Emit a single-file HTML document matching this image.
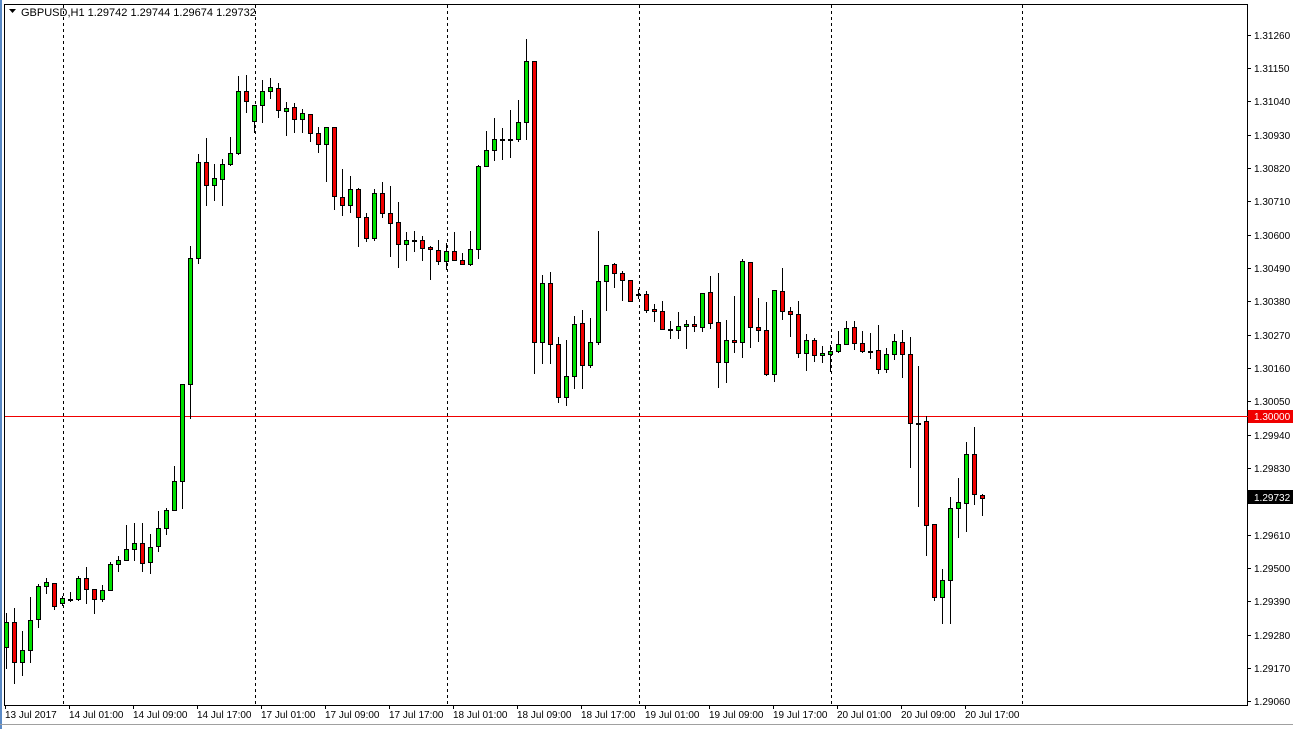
<!DOCTYPE html><html><head><meta charset="utf-8"><style>
html,body{margin:0;padding:0;background:#fff;width:1293px;height:729px;overflow:hidden}
svg{display:block;font-family:"Liberation Sans",sans-serif}
.g{fill:#00e000;stroke:#000;stroke-width:1}
.r{fill:#f00000;stroke:#000;stroke-width:1}
.w{stroke:#000;stroke-width:1}
.ax{font-size:10px;fill:#000}
</style></head><body>
<svg width="1293" height="729" viewBox="0 0 1293 729" xmlns="http://www.w3.org/2000/svg">
<rect x="0" y="0" width="2" height="729" fill="#5a8ac6"/>
<rect x="4.5" y="4.5" width="1243" height="701" fill="#fff" stroke="#000"/>
<g stroke="#000" stroke-dasharray="3,3">
<path d="M63.5 5V705M255.5 5V705M447.5 5V705M639.5 5V705M831.5 5V705M1022.5 5V705"/>
</g>
<path d="M5 416.5H1248" stroke="#f00000"/>
<g id="c"></g>
<path d="M9 9h7l-3.5 4z" fill="#000"/>
<text x="21" y="16" font-size="11" fill="#000">GBPUSD,H1  1.29742 1.29744 1.29674 1.29732</text>
<g class="ax">
<text x="1254" y="39">1.31260</text><text x="1254" y="72">1.31150</text><text x="1254" y="105">1.31040</text><text x="1254" y="139">1.30930</text><text x="1254" y="172">1.30820</text><text x="1254" y="205">1.30710</text><text x="1254" y="239">1.30600</text><text x="1254" y="272">1.30490</text><text x="1254" y="305">1.30380</text><text x="1254" y="339">1.30270</text><text x="1254" y="372">1.30160</text><text x="1254" y="405">1.30050</text><text x="1254" y="439">1.29940</text><text x="1254" y="472">1.29830</text><text x="1254" y="539">1.29610</text><text x="1254" y="572">1.29500</text><text x="1254" y="605">1.29390</text><text x="1254" y="639">1.29280</text><text x="1254" y="672">1.29170</text><text x="1254" y="705">1.29060</text>
</g>
<g stroke="#000"><path d="M1248 35.5h3M1248 68.5h3M1248 101.5h3M1248 135.5h3M1248 168.5h3M1248 201.5h3M1248 235.5h3M1248 268.5h3M1248 301.5h3M1248 335.5h3M1248 368.5h3M1248 401.5h3M1248 435.5h3M1248 468.5h3M1248 535.5h3M1248 568.5h3M1248 601.5h3M1248 635.5h3M1248 668.5h3M1248 701.5h3"/></g>
<rect x="1248" y="410" width="45" height="13" fill="#f00000"/>
<text x="1254" y="420" font-size="10" fill="#fff">1.30000</text>
<rect x="1248" y="490" width="45" height="14" fill="#000"/>
<text x="1254" y="501" font-size="10" fill="#fff">1.29732</text>
<g stroke="#000"><path d="M5.5 705v4M69.5 705v4M133.5 705v4M197.5 705v4M261.5 705v4M325.5 705v4M389.5 705v4M453.5 705v4M517.5 705v4M581.5 705v4M645.5 705v4M709.5 705v4M773.5 705v4M837.5 705v4M901.5 705v4M965.5 705v4"/></g>
<g class="ax">
<text x="5" y="718">13 Jul 2017</text><text x="69" y="718">14 Jul 01:00</text><text x="133" y="718">14 Jul 09:00</text><text x="197" y="718">14 Jul 17:00</text><text x="261" y="718">17 Jul 01:00</text><text x="325" y="718">17 Jul 09:00</text><text x="389" y="718">17 Jul 17:00</text><text x="453" y="718">18 Jul 01:00</text><text x="517" y="718">18 Jul 09:00</text><text x="581" y="718">18 Jul 17:00</text><text x="645" y="718">19 Jul 01:00</text><text x="709" y="718">19 Jul 09:00</text><text x="773" y="718">19 Jul 17:00</text><text x="837" y="718">20 Jul 01:00</text><text x="901" y="718">20 Jul 09:00</text><text x="965" y="718">20 Jul 17:00</text>
</g>
<path d="M0 724.5H1293" stroke="#a0a0a0"/>
</svg>
<script>
var d=[[613,622,647,668,'g'],[608,622,662,683,'r'],[631,650,662,675,'g'],[597,620,650,662,'g'],[584,586,619,627,'g'],[578,582,586,593,'g'],[583,583,606,609,'r'],[596,598,603,605,'g'],[592,599,599,601,'d'],[576,578,599,600,'g'],[567,578,589,603,'r'],[589,589,599,613,'r'],[585,590,599,601,'g'],[562,564,590,590,'g'],[556,560,564,571,'g'],[525,549,560,560,'g'],[523,543,549,560,'g'],[523,543,563,571,'r'],[534,547,562,573,'g'],[511,528,546,551,'g'],[508,510,528,534,'g'],[466,481,510,510,'g'],[384,384,481,508,'g'],[246,258,384,418,'g'],[154,162,258,263,'g'],[138,162,185,205,'r'],[164,178,185,200,'g'],[159,164,179,205,'g'],[137,153,164,165,'g'],[76,91,153,154,'g'],[75,91,101,112,'r'],[105,105,121,132,'g'],[80,91,105,122,'g'],[78,87,91,98,'g'],[83,88,110,117,'r'],[102,108,111,135,'g'],[103,107,119,132,'r'],[109,113,119,132,'g'],[114,114,133,141,'r'],[127,133,144,152,'r'],[127,127,144,181,'g'],[127,127,196,209,'r'],[169,197,205,215,'r'],[176,189,205,212,'g'],[188,189,217,246,'r'],[213,217,238,241,'r'],[189,193,238,240,'g'],[182,193,213,217,'r'],[186,213,223,256,'r'],[202,222,244,267,'r'],[232,240,244,260,'g'],[231,240,240,251,'d'],[236,240,248,260,'r'],[246,247,249,279,'r'],[240,250,261,264,'r'],[243,251,261,269,'g'],[232,251,260,260,'r'],[253,260,264,264,'r'],[231,249,264,265,'g'],[165,166,249,258,'g'],[131,150,166,166,'g'],[118,139,150,160,'g'],[128,139,139,159,'d'],[110,139,139,157,'d'],[100,122,139,141,'g'],[39,61,122,139,'g'],[61,61,342,373,'r'],[275,283,342,363,'g'],[272,283,344,363,'r'],[337,344,397,402,'r'],[340,376,397,405,'g'],[316,324,376,388,'g'],[310,323,365,388,'r'],[318,342,365,367,'g'],[231,281,342,344,'g'],[265,265,281,310,'g'],[263,264,273,287,'r'],[271,273,280,300,'r'],[280,280,301,301,'r'],[289,294,294,298,'d'],[291,294,310,312,'r'],[304,309,311,321,'r'],[301,311,329,329,'r'],[321,329,329,338,'d'],[312,326,330,338,'g'],[320,324,326,348,'g'],[316,324,326,331,'r'],[293,293,327,331,'g'],[276,292,323,328,'r'],[273,322,362,387,'r'],[320,340,362,382,'g'],[296,340,342,352,'r'],[259,261,342,357,'g'],[262,262,327,347,'r'],[298,327,330,341,'r'],[302,330,374,375,'r'],[290,290,374,381,'g'],[268,291,311,319,'r'],[307,311,314,336,'r'],[301,314,353,357,'r'],[334,340,353,370,'g'],[338,340,355,361,'r'],[346,353,355,362,'g'],[345,351,354,371,'g'],[331,344,351,352,'g'],[321,328,344,344,'g'],[321,327,343,349,'r'],[331,343,351,352,'r'],[333,351,351,358,'d'],[325,350,369,373,'r'],[348,354,369,372,'g'],[334,341,354,359,'g'],[330,342,354,377,'r'],[337,354,423,467,'r'],[366,423,423,506,'d'],[416,421,525,555,'r'],[524,524,597,600,'r'],[569,580,597,623,'g'],[497,508,580,623,'g'],[478,502,508,537,'g'],[442,454,503,531,'g'],[427,454,494,504,'r'],[494,495,498,515,'r']];
var s='';for(var i=0;i<d.length;i++){var c=6+8*i,a=d[i];s+='<path class="w" d="M'+(c+.5)+' '+a[0]+'V'+(a[3]+1)+'"/>';if(a[4]=='d'){s+='<rect x="'+(c-2)+'" y="'+a[1]+'" width="5" height="2" fill="#000"/>';}else{var h=Math.max(a[2]-a[1],1);s+='<rect class="'+a[4]+'" x="'+(c-1.5)+'" y="'+(a[1]+.5)+'" width="4" height="'+h+'"/>';}}
document.getElementById('c').innerHTML=s;
</script>
</body></html>
